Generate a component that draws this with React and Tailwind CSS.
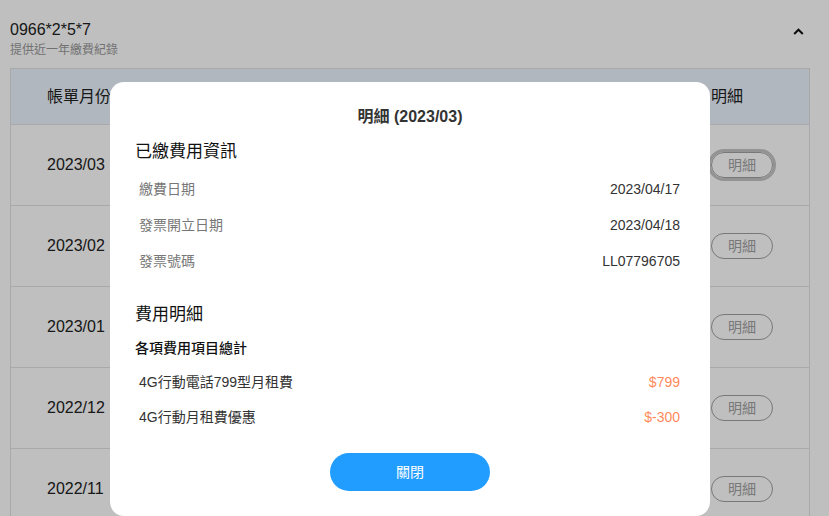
import React from 'react';

const months = ['2023/03', '2023/02', '2023/01', '2022/12', '2022/11'];

const paidInfo = [
  { label: '繳費日期', value: '2023/04/17' },
  { label: '發票開立日期', value: '2023/04/18' },
  { label: '發票號碼', value: 'LL07796705' },
];

const feeItems = [
  { label: '4G行動電話799型月租費', value: '$799' },
  { label: '4G行動月租費優惠', value: '$-300' },
];

const font = { fontFamily: '"Liberation Sans", "Noto Sans CJK TC", sans-serif' };

const App = () => {
  return (
    <div className="relative h-[516px] w-full overflow-hidden bg-white" style={font}>
      {/* page behind the dialog */}
      <div className="px-[10px] pt-[19px]">
        <div className="flex items-start justify-between">
          <div>
            <div className="text-[16px] leading-[22px] text-[#222]">0966*2*5*7</div>
            <div className="text-[12px] leading-[18px] text-[#999]">提供近一年繳費紀錄</div>
          </div>
          <svg width="11" height="7" viewBox="0 0 11 7" className="mr-[15px] mt-[9px]">
            <polyline points="1.2,6 5.5,1.7 9.8,6" fill="none" stroke="#111" strokeWidth="2" />
          </svg>
        </div>

        <div className="mt-[9px] w-[800px] border-x border-[#e2e2e2]">
          <div className="grid h-[57px] grid-cols-[1fr_98px] items-center border-y border-[#e2e2e2] bg-[#ecf5ff] text-[16px] text-[#222]">
            <div className="pl-[36px]">帳單月份</div>
            <div>明細</div>
          </div>
          {months.map((m, i) => (
            <div
              key={m}
              className="grid h-[81px] grid-cols-[1fr_98px] items-center border-b border-[#e2e2e2] text-[16px] text-[#222]"
            >
              <div className="pl-[36px]">{m}</div>
              <div>
                <button
                  className={
                    'h-[26px] w-[62px] rounded-full border border-[#a0a0a0] text-[14px] text-[#a0a0a0] ' +
                    (i === 0 ? 'outline outline-[3px] outline-offset-0 outline-[#c4c4c4]' : '')
                  }
                >
                  明細
                </button>
              </div>
            </div>
          ))}
        </div>
      </div>

      {/* overlay */}
      <div className="absolute inset-0 bg-black/25">
        <div className="absolute left-[110px] top-[82px] h-[434px] w-[600px] rounded-[14px] bg-white px-[25px] pt-[23px]">
          <div className="text-center text-[16px] font-bold leading-[24px] text-[#333]">明細 (2023/03)</div>

          <div className="mt-[11px] text-[17px] leading-[24px] text-[#111]">已繳費用資訊</div>
          <div className="mt-[7px]">
            {paidInfo.map((r) => (
              <div key={r.label} className="flex h-[36px] items-center justify-between pl-[4px] pr-[5px] text-[14px]">
                <span className="text-[#777]">{r.label}</span>
                <span className="text-[#333]">{r.value}</span>
              </div>
            ))}
          </div>

          <div className="mt-[24px] text-[17px] leading-[24px] text-[#111]">費用明細</div>
          <div className="mt-[10px] text-[14px] font-medium leading-[22px] text-[#111]">各項費用項目總計</div>
          <div className="mt-[6px]">
            {feeItems.map((r) => (
              <div key={r.label} className="flex h-[35px] items-center justify-between pl-[4px] pr-[5px] text-[14px]">
                <span className="text-[#333]">{r.label}</span>
                <span className="text-[#ff8a5b]">{r.value}</span>
              </div>
            ))}
          </div>

          <div className="mt-[18px] flex justify-center">
            <button className="h-[38px] w-[160px] rounded-full bg-[#219dff] text-[14px] text-white">關閉</button>
          </div>
        </div>
      </div>
    </div>
  );
};

export default App;
